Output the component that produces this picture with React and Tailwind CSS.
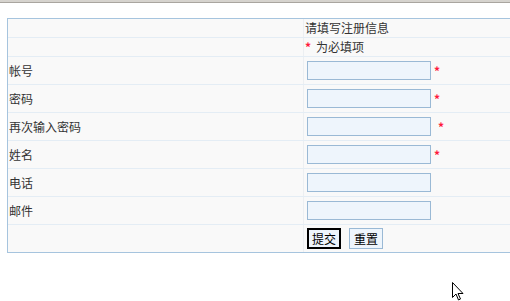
import React from 'react';

const fields = [
  { label: '帐号', required: true },
  { label: '密码', required: true },
  { label: '再次输入密码', required: true, spaced: true },
  { label: '姓名', required: true },
  { label: '电话' },
  { label: '邮件' },
];

const Row = ({ label, children, last, h = 'h-[27px]' }) => (
  <div className={`flex ${last ? '' : 'border-b border-[#e4edf5]'}`}>
    <div className={`w-[296px] ${h} border-r border-[#eceff2] pl-[1px] flex items-center`}>{label}</div>
    <div className={`flex-1 ${h} flex items-center`}>{children}</div>
  </div>
);

const App = () => {
  return (
    <div
      className="relative w-[510px] h-[301px] overflow-hidden bg-white text-[12px] text-[#333]"
      style={{ fontFamily: '"Noto Sans CJK SC", "Liberation Sans", sans-serif' }}
    >
      <div className="h-[3px] bg-[#d6d3ce] border-b border-[#a9a59f]" />
      <div className="ml-[7px] mt-[15px] w-[520px] bg-[#f9f9f9] border border-[#a6c4de]">
        <Row h="h-[18px]" label="">
          <span className="pl-[1px] leading-none">请填写注册信息</span>
        </Row>
        <Row h="h-[18px]" label="">
          <span className="pl-[1px] leading-none">
            <span className="text-[#ff1a3c] font-bold mr-[5px]">*</span>为必填项
          </span>
        </Row>
        {fields.map((f, i) => (
          <Row key={i} label={f.label}>
            <input
              className="ml-[3px] w-[124px] h-[19px] bg-[#eef5fc] border border-[#9ab9d5] outline-none"
              type="text"
            />
            {f.required && (
              <span className={`text-[#ff1a3c] font-bold ${f.spaced ? 'ml-[7px]' : 'ml-[3px]'} leading-none`}>*</span>
            )}
          </Row>
        ))}
        <Row last label="">
          <button className="ml-[3px] w-[34px] h-[21px] bg-[#eef5fc] border-2 border-black text-black leading-none">
            提交
          </button>
          <button className="ml-[8px] w-[34px] h-[21px] bg-[#eef5fc] border border-[#9ab9d5] text-black leading-none">
            重置
          </button>
        </Row>
      </div>
      <svg className="absolute left-[452px] top-[282px]" width="13" height="20" viewBox="0 0 13 20">
        <path
          d="M0.5 0.5 L0.5 15.5 L4 12 L6.5 18 L8.5 17 L6 11.5 L11 11.5 Z"
          fill="white"
          stroke="black"
          strokeWidth="1"
          strokeLinejoin="miter"
        />
      </svg>
    </div>
  );
};

export default App;
